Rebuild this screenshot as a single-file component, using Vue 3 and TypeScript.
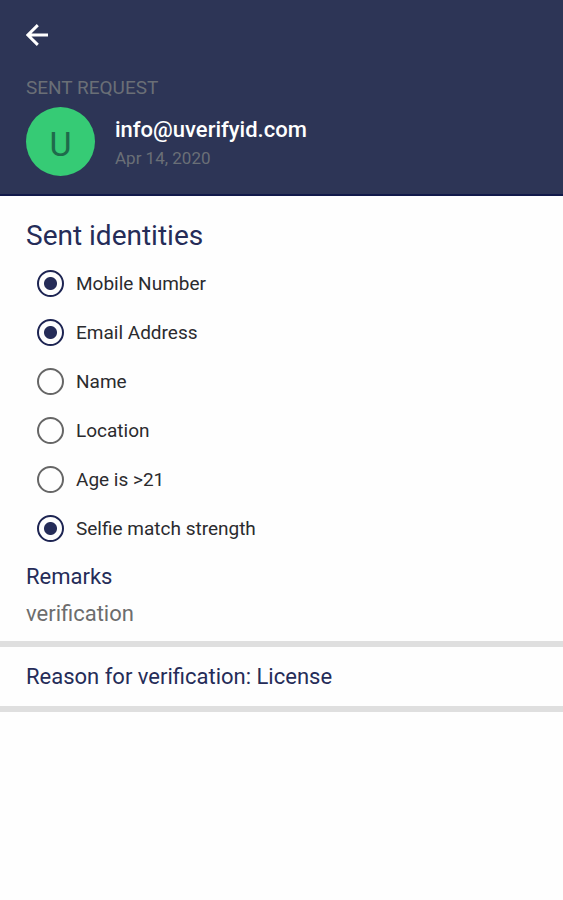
<script setup lang="ts">
import { ref } from 'vue'

interface Identity {
  id: string
  label: string
  sent: boolean
}

const identities = ref<Identity[]>([
  { id: 'mobile', label: 'Mobile Number', sent: true },
  { id: 'email', label: 'Email Address', sent: true },
  { id: 'name', label: 'Name', sent: false },
  { id: 'location', label: 'Location', sent: false },
  { id: 'age', label: 'Age is >21', sent: false },
  { id: 'selfie', label: 'Selfie match strength', sent: true },
])
</script>

<template>
  <div class="screen">
    <header class="header">
      <button class="back" type="button" aria-label="Back">
        <svg viewBox="0 0 22 22" width="22" height="22" fill="none" stroke="currentColor" stroke-width="2.9">
          <path d="M22 11H2.2M11.8 1.1L1.9 11l9.9 9.9" />
        </svg>
      </button>
      <p class="kind">SENT REQUEST</p>
      <div class="contact">
        <span class="avatar">U</span>
        <div class="details">
          <h1 class="email">info@uverifyid.com</h1>
          <p class="date">Apr 14, 2020</p>
        </div>
      </div>
    </header>

    <main>
      <section class="identities">
        <h2 class="title">Sent identities</h2>
        <ul class="list">
          <li v-for="item in identities" :key="item.id" class="row">
            <input :id="item.id" v-model="item.sent" class="mark" type="checkbox" />
            <label :for="item.id">{{ item.label }}</label>
          </li>
        </ul>
        <h3 class="remarks">Remarks</h3>
        <p class="note">verification</p>
      </section>
      <p class="reason">Reason for verification: License</p>
    </main>
  </div>
</template>

<style>
body {
  background: #fefefe;
}
</style>

<style scoped>
.screen {
  font-family: Roboto, "Liberation Sans", sans-serif;
  color: #252c58;
}

h1,
h2,
h3,
p,
ul {
  margin: 0;
  padding: 0;
  font-weight: 400;
}

.header {
  padding: 24px 26px 18px;
  background: #2d3556;
  border-bottom: 2px solid #11194a;
}

.back {
  display: block;
  padding: 0;
  border: 0;
  background: none;
  color: #fff;
  cursor: pointer;
}

.back svg {
  display: block;
}

.kind {
  margin-top: 30px;
  font-size: 19px;
  line-height: 24px;
  color: #6a6f76;
}

.contact {
  display: flex;
  align-items: center;
  gap: 20px;
  margin-top: 7px;
}

.avatar {
  display: flex;
  align-items: center;
  justify-content: center;
  box-sizing: border-box;
  width: 69px;
  height: 69px;
  padding-top: 4px;
  border-radius: 50%;
  background: #36cb75;
  color: #1f6a4b;
  font-size: 34px;
  line-height: 40px;
}

.details {
  padding-top: 5px;
}

.email {
  font-size: 22px;
  line-height: 28px;
  font-weight: 500;
  color: #fff;
}

.date {
  font-size: 17px;
  line-height: 28px;
  color: #6a6f76;
}

.identities {
  padding: 22px 26px 11px;
}

.title {
  font-size: 28px;
  line-height: 36px;
}

.list {
  margin-top: 5px;
  list-style: none;
}

.row {
  display: flex;
  align-items: center;
  gap: 12px;
  height: 49px;
  padding-left: 11px;
  font-size: 19px;
  color: #2b2b2e;
}

.mark {
  flex: none;
  appearance: none;
  width: 27px;
  height: 27px;
  margin: 0;
  border: 2px solid #666;
  border-radius: 50%;
}

.mark:checked {
  border-color: #1d2452;
  background: radial-gradient(circle, #252c58 6px, transparent 7px);
}

.remarks {
  margin-top: 8px;
  font-size: 22px;
  line-height: 32px;
}

.note {
  margin-top: 5px;
  font-size: 22px;
  line-height: 32px;
  color: #6d6d6d;
}

.reason {
  padding: 14px 26px 13px;
  border-top: 6px solid #dfdfdf;
  border-bottom: 6px solid #dfdfdf;
  font-size: 22px;
  line-height: 32px;
}
</style>
